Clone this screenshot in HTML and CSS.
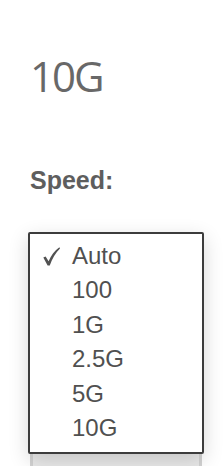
FILE: index.html
```html
<!DOCTYPE html>
<html lang="en">

<head>
  <meta charset="UTF-8">
  <meta name="viewport" content="width=device-width, initial-scale=1.0">
  <title>Port Speed</title>
  <link rel="stylesheet" href="styles.css">
</head>

<body>
  <div class="current-speed">10G</div>

  <div class="field-label">Speed:</div>

  <div class="field">
    <div class="select"></div>

    <!-- open dropdown menu over the select -->
    <ul class="menu">
      <li class="option selected">
        <span class="check">
          <svg width="17" height="19" viewBox="0 0 17 19">
            <path d="M0.3 10.6 L2.6 9.4 L5.6 14.2 C8.2 8.4 11.6 3.6 16.4 0.3 L17 1.4 C12.6 5.6 9.2 11.4 6.8 18.6 L4.6 18.6 Z" fill="#525252"/>
          </svg>
        </span>
        Auto
      </li>
      <li class="option"><span class="check"></span>100</li>
      <li class="option"><span class="check"></span>1G</li>
      <li class="option"><span class="check"></span>2.5G</li>
      <li class="option"><span class="check"></span>5G</li>
      <li class="option"><span class="check"></span>10G</li>
    </ul>
  </div>
</body>

</html>
```

FILE: styles.css
```css
body {
  margin: 0;
  padding: 55px 0 0 0;
  background-color: #ffffff;
  font-family: "Liberation Sans", Arial, sans-serif;
  overflow: hidden;
}

.current-speed {
  margin-left: 30px;
  font-family: "Open Sans", sans-serif;
  font-size: 42px;
  line-height: 42px;
  letter-spacing: -2px;
  color: #686868;
}

.field-label {
  margin: 68px 0 0 30px;
  font-size: 25px;
  line-height: 30px;
  font-weight: bold;
  color: #5e5e5e;
}

.field {
  position: relative;
  margin: 37px 0 0 28px;
  width: 176px;
}

.select {
  margin-left: 2px;
  width: 166px;
  height: 234px;
  background-color: #e9e9e9;
  border-left: 3px solid #d2d2d2;
  border-right: 3px solid #d2d2d2;
}

.menu {
  position: absolute;
  top: 0;
  left: 0;
  width: 172px;
  margin: 0;
  padding: 5px 0 7px 0;
  list-style: none;
  background-color: #ffffff;
  border: 2px solid #3c3c3c;
  border-radius: 2px;
  box-shadow: 0 6px 20px rgba(0, 0, 0, 0.16);
}

.option {
  display: flex;
  align-items: center;
  height: 34.4px;
  font-size: 24px;
  line-height: 34.4px;
  color: #505050;
}

.check {
  flex: 0 0 42px;
  display: flex;
  align-items: center;
}

.check svg {
  margin-left: 13px;
  margin-top: 1px;
}
```
